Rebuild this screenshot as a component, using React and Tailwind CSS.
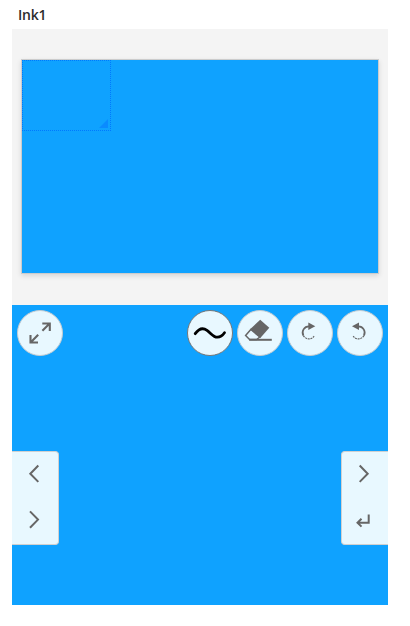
const Round = ({ label, active, children }) => (
  <button
    aria-label={label}
    className={`size-[46px] shrink-0 rounded-full border bg-[#e8f8ff] ${active ? "border-[#777777]" : "border-[#c6ccd0]"}`}
  >
    <svg viewBox="0 0 46 46" className="-m-px block size-[46px]" fill="none" stroke="#666666" strokeWidth="2.1">
      {children}
    </svg>
  </button>
);

const SidePanel = ({ className, children }) => (
  <div className={`h-[94px] w-[47px] border-y border-[#d0d0d0] bg-[#e8f8ff] ${className}`}>
    <svg viewBox="0 0 47 94" className="-mt-px block h-[94px] w-[47px]" fill="none" stroke="#666666" strokeWidth="2">
      {children}
    </svg>
  </div>
);

export default function App() {
  return (
    <div className="h-[626px] w-[410px] bg-white px-3 pb-[21px]">
      <h1 className="h-[29px] pt-[5px] pl-1.5 font-['Open_Sans',sans-serif] text-sm leading-5 font-semibold tracking-[-0.2px] text-[#2b2b2b]">
        Ink1
      </h1>
      <div className="h-[276px] w-[376px] bg-[#f4f4f4] px-[9px] pt-[30px]">
        <div className="h-[215px] w-[358px] border border-[#cccccc] bg-[#0fa2ff] shadow-[0_2px_5px_rgba(0,0,0,0.12)]">
          <div className="flex h-[71px] w-[89px] items-end justify-end border border-dotted border-[#0078ff] pr-0.5 pb-0.5">
            <svg viewBox="0 0 9 9" className="size-[9px]">
              <path d="M9 0v9H0z" fill="#0a8bff" />
            </svg>
          </div>
        </div>
      </div>
      <div className="flex h-[300px] w-[376px] flex-col bg-[#0fa2ff]">
        <div className="flex h-[146px] justify-between px-[5px] pt-[5px]">
          <Round label="Expand">
            <path d="M25.3 13.5h7.5v7.5M32.6 13.6l-7.2 7.2M21 32.5h-7.5v-7.6M13.6 32.4l7.6-7.7" />
          </Round>
          <div className="flex gap-1">
            <Round label="Pen" active>
              <path
                d="M8.2 23.7C12 18.5 16 17.5 20 20.4C24 23.2 26.5 27.4 30.4 27.2C33.5 27 36 24.8 37.5 22.7"
                stroke="#000000"
                strokeWidth="2.8"
                strokeLinecap="round"
              />
            </Round>
            <Round label="Eraser">
              <path d="M23.2 9.7l9.1 8-9 10.3-10-9z" fill="#666666" stroke="none" />
              <path d="M13.8 19.5l-5.2 5.9 4 4.2h7l3.2-2.6z" strokeWidth="1.5" />
              <path d="M12.2 29.8h22.6" strokeWidth="2" />
            </Round>
            <Round label="Redo">
              <path d="M21.3 12.5l7 3.8-7 3.7z" fill="#666666" stroke="none" />
              <path d="M22 16.3a6.3 6.3 0 0 0-5.6 9.3" strokeWidth="1.7" />
              <path d="M16.4 25.6a6.3 6.3 0 0 0 10.7.6" strokeWidth="1.2" strokeDasharray="2 .7" />
            </Round>
            <Round label="Undo">
              <path d="M22 12.5l-7 3.8 7 3.7z" fill="#666666" stroke="none" />
              <path d="M21.3 16.3a6.3 6.3 0 0 1 5.6 9.3" strokeWidth="1.7" />
              <path d="M26.9 25.6a6.3 6.3 0 0 1-10.7.6" strokeWidth="1.2" strokeDasharray="2 .7" />
            </Round>
          </div>
        </div>
        <div className="flex justify-between">
          <SidePanel className="rounded-r-[4px] border-r">
            <path d="M26.3 14.5l-8 8.2 8 8.2M18 60.4l8 8.2-8 8.2" />
          </SidePanel>
          <SidePanel className="rounded-l-[4px] border-l">
            <path d="M17.7 14.5l8 8.2-8 8.2M26.7 63.5v8.2H15.8M19.5 67.8l-4 3.9 4 3.9" />
          </SidePanel>
        </div>
      </div>
    </div>
  );
}
